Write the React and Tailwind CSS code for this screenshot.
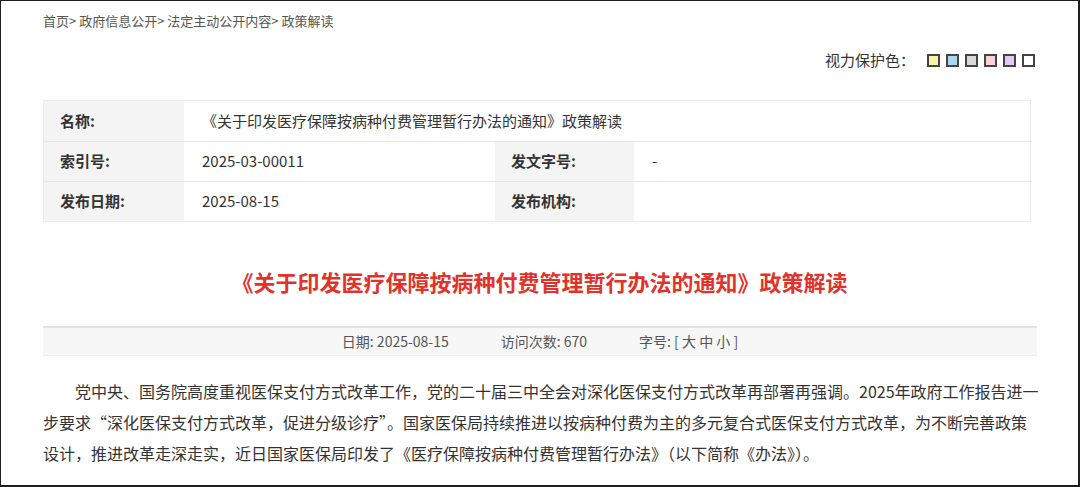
import React from "react";

const swatches = ["#faf3a0", "#a6d8f0", "#d9d9d9", "#fbd0d8", "#e2c8f5", "#ffffff"];

function InfoTable() {
  // label cells are grey, value cells white
  const label = "bg-[#f4f4f4] pl-4 font-bold text-[15px] text-[#333] flex items-center";
  const value = "pl-[18px] text-[15px] text-[#333] flex items-center";
  return (
    <div className="ml-[42px] w-[988px] border border-[#ececec] grid grid-cols-[140px_311px_139px_398px] grid-rows-[40px_40px_40px]">
      <div className={label}>名称:</div>
      <div className={`${value} col-span-3`}>《关于印发医疗保障按病种付费管理暂行办法的通知》政策解读</div>

      <div className={`${label} border-t border-[#e6e6e6]`}>索引号:</div>
      <div className={`${value} border-t border-[#e6e6e6]`}>2025-03-00011</div>
      <div className={`${label} border-t border-[#e6e6e6]`}>发文字号:</div>
      <div className={`${value} pl-5 border-t border-[#e6e6e6]`}>-</div>

      <div className={`${label} border-t border-[#e6e6e6]`}>发布日期:</div>
      <div className={`${value} border-t border-[#e6e6e6]`}>2025-08-15</div>
      <div className={`${label} border-t border-[#e6e6e6]`}>发布机构:</div>
      <div className={`${value} border-t border-[#e6e6e6]`}></div>
    </div>
  );
}

export default function App() {
  return (
    <div
      className="w-[1080px] h-[487px] overflow-hidden bg-white border-l border-t border-r-2 border-b-2 border-[#1e1e1e]"
      style={{ fontFamily: '"Noto Sans CJK SC", "Noto Sans", sans-serif' }}
    >
      {/* breadcrumb */}
      <div className="pl-[42px] pt-[11px] text-[13px] leading-[18px] text-[#555]">
        首页&gt; 政府信息公开&gt; 法定主动公开内容&gt; 政策解读
      </div>

      {/* eye-care colours */}
      <div className="mt-[20px] flex items-center justify-end pr-[43px] h-[20px]">
        <span className="text-[15px] text-[#333] mr-[12px]">视力保护色：</span>
        <div className="flex gap-[6px]">
          {swatches.map((c) => (
            <span
              key={c}
              className="w-[13px] h-[13px] border-2 border-[#444]"
              style={{ backgroundColor: c }}
            />
          ))}
        </div>
      </div>

      <div className="mt-[30px]">
        <InfoTable />
      </div>

      <h1 className="mt-[44px] text-center text-[22px] leading-[30px] font-bold text-[#e2332b]">
        《关于印发医疗保障按病种付费管理暂行办法的通知》政策解读
      </h1>

      {/* meta bar */}
      <div className="mt-[30px] ml-[42px] w-[994px] h-[30px] bg-[#f7f7f7] border-t-2 border-[#e2e2e2] border-b border-b-[#eeeeee] flex items-center justify-center text-[14px] text-[#555]">
        <span>日期: 2025-08-15</span>
        <span className="ml-[52px]">访问次数: 670</span>
        <span className="ml-[52px]">字号: [ 大 中 小 ]</span>
      </div>

      <p className="mt-[20px] ml-[42px] w-[996px] indent-[32px] text-[16px] leading-[31px] text-[#333]">
        党中央、国务院高度重视医保支付方式改革工作，党的二十届三中全会对深化医保支付方式改革再部署再强调。2025年政府工作报告进一步要求“深化医保支付方式改革，促进分级诊疗”。国家医保局持续推进以按病种付费为主的多元复合式医保支付方式改革，为不断完善政策设计，推进改革走深走实，近日国家医保局印发了《医疗保障按病种付费管理暂行办法》（以下简称《办法》）。
      </p>
    </div>
  );
}
